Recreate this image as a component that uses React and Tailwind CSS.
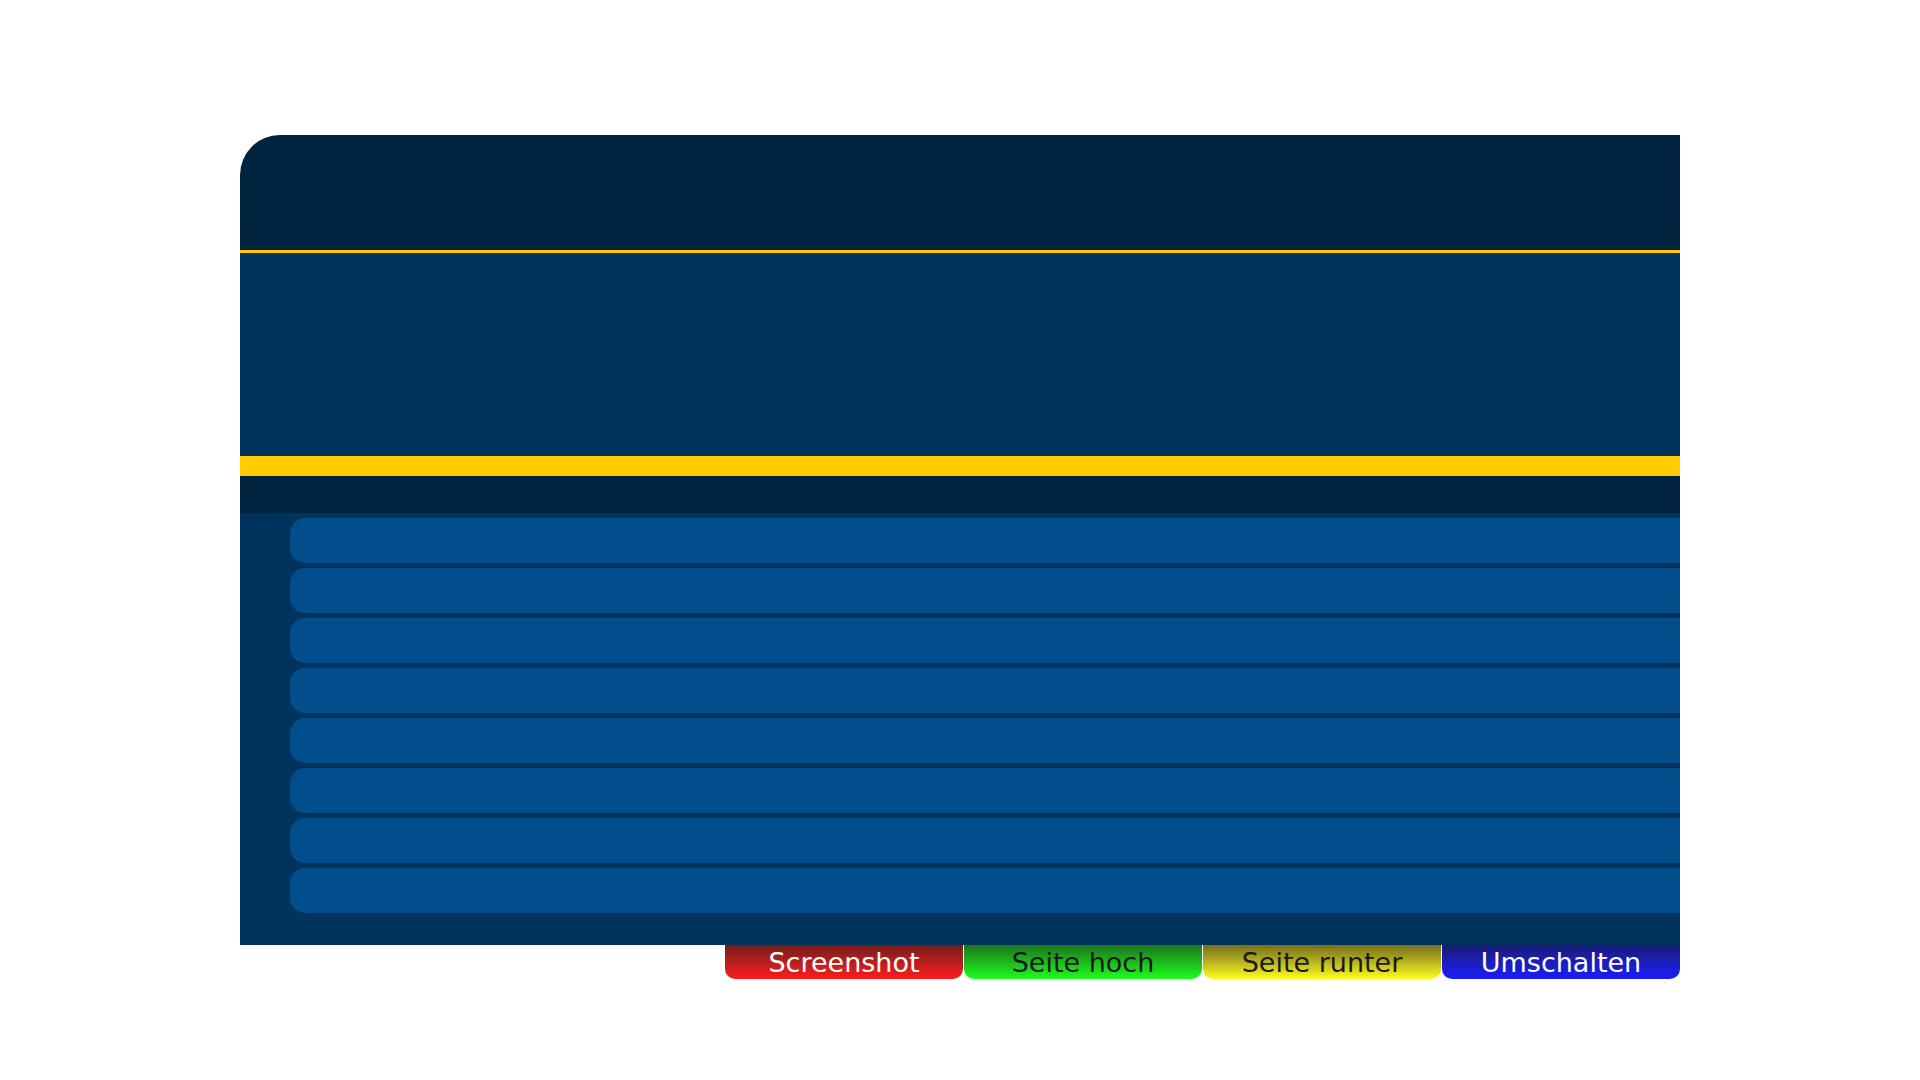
import React from "react"

const buttons = [
  { label: "Screenshot", className: "bg-gradient-to-b from-[#761a1a] to-[#ff1a1a] text-white" },
  { label: "Seite hoch", className: "bg-gradient-to-b from-[#1a761a] to-[#1aff1a] text-[#1a1a1a]" },
  { label: "Seite runter", className: "bg-gradient-to-b from-[#766e1a] to-[#ffff1a] text-[#1a1a1a]" },
  { label: "Umschalten", className: "bg-gradient-to-b from-[#1a1a76] to-[#1a1aff] text-white" },
]

const rows = [0, 1, 2, 3, 4, 5, 6, 7]

const App = () => {
  return (
    <div className="w-[1920px] h-[1080px] bg-white pt-[135px] pl-[240px] font-['DejaVu_Sans',sans-serif]">
      <div className="w-[1440px] flex flex-col">
        {/* Header */}
        <div className="h-[115px] bg-[#00233f] rounded-tl-[40px]" />
        <div className="h-[3px] bg-[#ffcc00]" />

        {/* Info area */}
        <div className="h-[203px] bg-[#00335d]" />
        <div className="h-[20px] bg-[#ffcc00]" />
        <div className="h-[37px] bg-[#00233f]" />

        {/* List */}
        <div className="h-[432px] bg-[#00335d] pt-[5px] pl-[50px] flex flex-col gap-[5px]">
          {rows.map((row) => (
            <div key={row} className="h-[45px] bg-[#024d8b] rounded-l-[15px]" />
          ))}
        </div>

        {/* Color keys */}
        <div className="flex justify-end gap-px">
          {buttons.map((button) => (
            <div
              key={button.label}
              className={`w-[238px] h-[34px] rounded-b-[10px] flex items-center justify-center text-[27px] leading-none ${button.className}`}
            >
              {button.label}
            </div>
          ))}
        </div>
      </div>
    </div>
  )
}

export default App
